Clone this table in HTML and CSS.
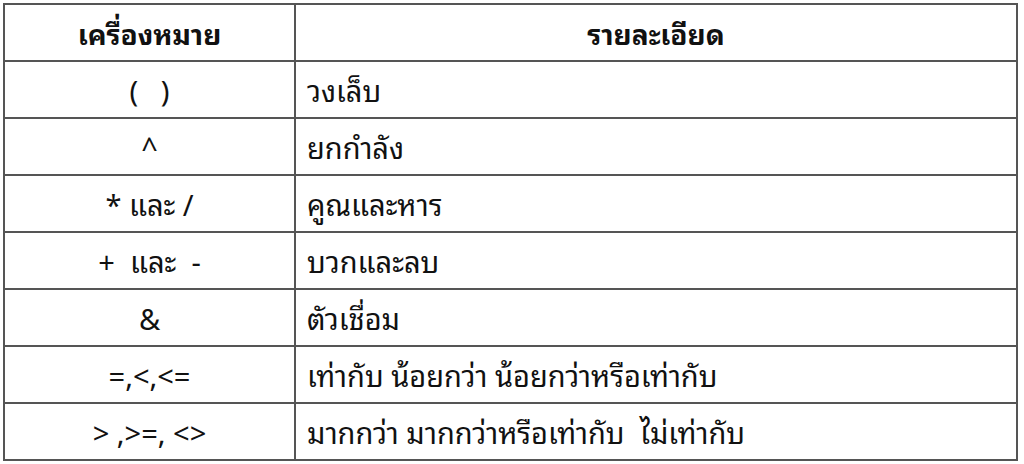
FILE: index.html
```html
<!DOCTYPE html>
<html lang="th">
<head>
<meta charset="utf-8">
<link rel="stylesheet" href="styles.css">
</head>
<body>
<table class="ops">
  <colgroup><col class="c1"><col class="c2"></colgroup>
  <thead>
    <tr><th>เครื่องหมาย</th><th>รายละเอียด</th></tr>
  </thead>
  <tbody>
    <tr><td class="sym">(&nbsp;&nbsp;&nbsp;)</td><td class="desc">วงเล็บ</td></tr>
    <tr><td class="sym">^</td><td class="desc">ยกกำลัง</td></tr>
    <tr><td class="sym">* และ /</td><td class="desc">คูณและหาร</td></tr>
    <tr><td class="sym">+&nbsp;&nbsp;และ&nbsp;&nbsp;-</td><td class="desc">บวกและลบ</td></tr>
    <tr><td class="sym">&amp;</td><td class="desc">ตัวเชื่อม</td></tr>
    <tr><td class="sym">=,&lt;,&lt;=</td><td class="desc">เท่ากับ น้อยกว่า น้อยกว่าหรือเท่ากับ</td></tr>
    <tr><td class="sym">&gt; ,&gt;=, &lt;&gt;</td><td class="desc">มากกว่า มากกว่าหรือเท่ากับ&nbsp;&nbsp;ไม่เท่ากับ</td></tr>
  </tbody>
</table>
</body>
</html>
```
FILE: styles.css
```css
html, body {
  margin: 0;
  padding: 0;
  background: #ffffff;
}
body {
  padding: 3px 0 0 3px;
}
.ops {
  border-collapse: collapse;
  width: 1015px;
  font-family: "Noto Sans Thai Looped", "Loma", "Garuda", "Waree", "Tahoma", "Noto Sans Thai", "Noto Sans", sans-serif;
  font-size: 28px;
  line-height: 1;
  color: #111;
}
.c1 { width: 291px; }
.ops th, .ops td {
  border: 2px solid #555;
  height: 57px;
  padding: 0;
  box-sizing: border-box;
}
.ops th {
  font-weight: 700;
  text-align: center;
}
.ops td { font-size: 29px; }
.ops .sym { text-align: center; }
.ops .desc { padding-left: 11px; text-align: left; }
```
